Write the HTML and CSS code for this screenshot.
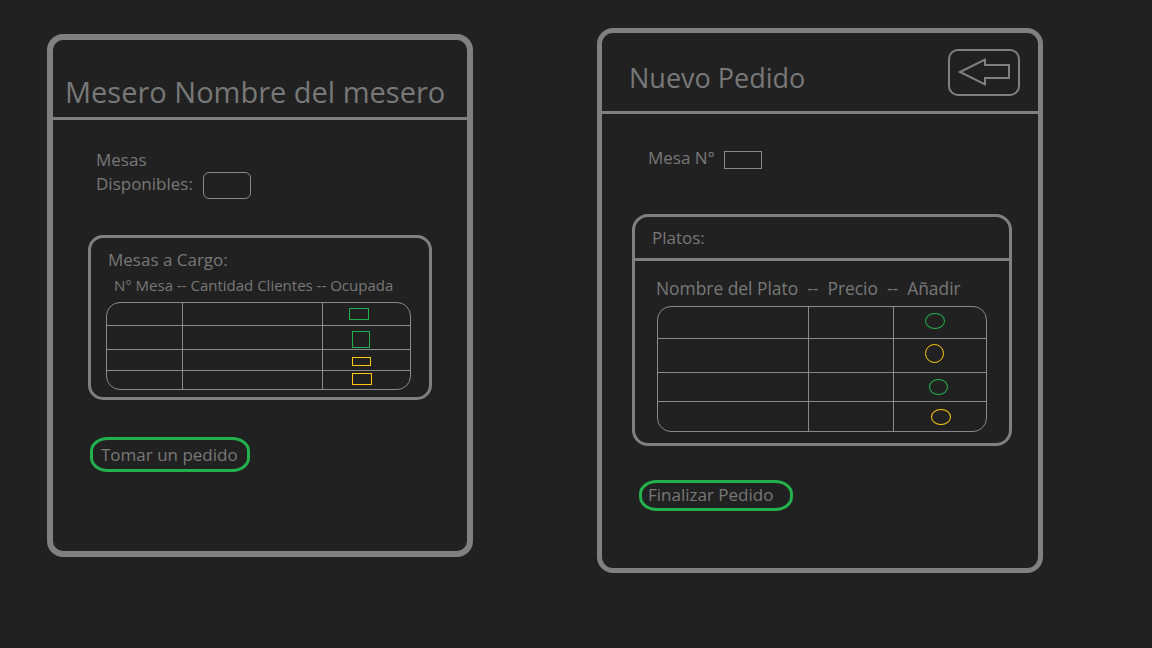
FILE: index.html
```html
<!DOCTYPE html>
<html lang="es">
<head>
    <meta charset="UTF-8">
    <title>Mesero | Pedidos</title>
    <link rel="stylesheet" href="styles.css">
</head>
<body>
    <main class="screens">
        <section class="panel panel-waiter">
            <header class="panel-head">
                <h1 class="panel-title">Mesero Nombre del mesero</h1>
            </header>
            <div class="panel-body">
                <div class="field-row field-tables">
                    <span class="field-label">Mesas<br>Disponibles:</span>
                    <span class="field-box field-box-round"></span>
                </div>

                <div class="card card-tables">
                    <h2 class="card-title">Mesas a Cargo:</h2>
                    <p class="card-cols">N° Mesa -- Cantidad Clientes -- Ocupada</p>
                    <div class="grid grid-tables">
                        <div class="cell"></div><div class="cell"></div><div class="cell cell-mark"><span class="mark rect green r1"></span></div>
                        <div class="cell"></div><div class="cell"></div><div class="cell cell-mark"><span class="mark rect green r2"></span></div>
                        <div class="cell"></div><div class="cell"></div><div class="cell cell-mark"><span class="mark rect yellow r3"></span></div>
                        <div class="cell"></div><div class="cell"></div><div class="cell cell-mark"><span class="mark rect yellow r4"></span></div>
                    </div>
                </div>

                <button class="pill-btn btn-take">Tomar un pedido</button>
            </div>
        </section>

        <section class="panel panel-order">
            <header class="panel-head">
                <h1 class="panel-title">Nuevo Pedido</h1>
                <button class="back-btn" aria-label="Volver">
                    <svg width="68" height="43" viewBox="0 0 68 43">
                        <polygon points="10,21 35,8.5 35,14 59,14 59,27 35,27 35,33.5" fill="none" stroke="#808080" stroke-width="2" stroke-linejoin="miter"/>
                    </svg>
                </button>
            </header>
            <div class="panel-body">
                <div class="field-row field-table-no">
                    <span class="field-label">Mesa N°</span>
                    <span class="field-box field-box-square"></span>
                </div>

                <div class="card card-dishes">
                    <div class="card-head">
                        <h2 class="card-title">Platos:</h2>
                    </div>
                    <p class="card-cols">Nombre del Plato  --  Precio  --  Añadir</p>
                    <div class="grid grid-dishes">
                        <div class="cell"></div><div class="cell"></div><div class="cell cell-mark"><span class="mark dot green d1"></span></div>
                        <div class="cell"></div><div class="cell"></div><div class="cell cell-mark"><span class="mark dot yellow d2"></span></div>
                        <div class="cell"></div><div class="cell"></div><div class="cell cell-mark"><span class="mark dot green d3"></span></div>
                        <div class="cell"></div><div class="cell"></div><div class="cell cell-mark"><span class="mark dot yellow d4"></span></div>
                    </div>
                </div>

                <button class="pill-btn btn-finish">Finalizar Pedido</button>
            </div>
        </section>
    </main>
</body>
</html>
```

FILE: styles.css
```css
* {
    box-sizing: border-box;
}

body {
    margin: 0;
    background-color: #212121;
    color: #787878;
    font-family: 'Open Sans', sans-serif;
    height: 648px;
    overflow: hidden;
}

.screens {
    display: flex;
    align-items: flex-start;
    gap: 124px;
    padding-left: 47px;
}

/* Panels */
.panel {
    border: 6px solid #808080;
    border-radius: 16px;
}

.panel-waiter {
    margin-top: 34px;
    width: 426px;
    height: 523px;
}

.panel-order {
    margin-top: 28px;
    width: 446px;
    height: 545px;
    border-width: 5px;
}

.panel-head {
    border-bottom: 3px solid #808080;
}

.panel-title {
    margin: 0;
    font-weight: 400;
    white-space: nowrap;
}

.panel-waiter .panel-head {
    height: 80px;
    padding: 32px 0 0 12px;
}

.panel-waiter .panel-title {
    font-size: 29px;
    line-height: 40px;
}

.panel-order .panel-head {
    height: 81px;
    display: flex;
    align-items: center;
    justify-content: space-between;
    padding: 0 18px 0 27px;
}

.panel-order .panel-title {
    font-size: 27px;
    line-height: 37px;
    margin-top: 10px;
}

.back-btn {
    width: 72px;
    height: 47px;
    padding: 0;
    border: 2px solid #808080;
    border-radius: 10px;
    background: none;
    display: flex;
}

/* Fields */
.field-row {
    display: flex;
    font-size: 17px;
    line-height: 24px;
}

.field-tables {
    margin: 28px 0 0 43px;
    align-items: flex-end;
    gap: 10px;
}

.field-box {
    display: inline-block;
    border: 1px solid #8a8a8a;
}

.field-box-round {
    width: 48px;
    height: 27px;
    border-radius: 6px;
    margin-bottom: -3px;
}

.field-table-no {
    margin: 32px 0 0 46px;
    align-items: center;
    gap: 9px;
}

.field-box-square {
    width: 38px;
    height: 18px;
    margin-top: 3px;
}

/* Cards */
.card {
    border: 3px solid #808080;
    border-radius: 15px;
}

.card-title {
    margin: 0;
    font-size: 17px;
    font-weight: 400;
    line-height: 23px;
}

.card-cols {
    margin: 0;
    white-space: pre;
}

.card-tables {
    margin: 39px 0 0 35px;
    width: 344px;
    height: 165px;
    padding: 10px 0 0 17px;
}

.card-tables .card-cols {
    font-size: 15px;
    line-height: 20px;
    margin: 4px 0 0 6px;
}

.card-dishes {
    margin: 44px 0 0 30px;
    width: 380px;
    height: 232px;
    border-radius: 16px;
}

.card-head {
    height: 44px;
    border-bottom: 3px solid #808080;
    display: flex;
    align-items: center;
    padding-left: 17px;
}

.card-dishes .card-cols {
    font-size: 17.4px;
    line-height: 23px;
    margin: 16px 0 0 21px;
}

/* Wireframe grids */
.grid {
    display: grid;
    border: 1px solid #8a8a8a;
    border-radius: 14px;
    overflow: hidden;
}

.cell {
    border-right: 1px solid #8a8a8a;
    border-bottom: 1px solid #8a8a8a;
}

.cell:nth-child(3n) {
    border-right: none;
}

.cell:nth-last-child(-n+3) {
    border-bottom: none;
}

.grid-tables {
    margin: 7px 0 0 -2px;
    width: 305px;
    height: 88px;
    grid-template-columns: 76px 140px 1fr;
    grid-template-rows: 23px 24px 21px 1fr;
}

.grid-dishes {
    margin: 6px 0 0 22px;
    width: 330px;
    height: 126px;
    grid-template-columns: 151px 85px 1fr;
    grid-template-rows: 32px 34px 29px 1fr;
}

.mark {
    display: block;
    border: 1px solid;
}

.green { border-color: #22b14c; }
.yellow { border-color: #ffc90e; }

/* Ocupada marks, offsets from the cell corner */
.rect.r1 { width: 20px; height: 12px; margin: 5px 0 0 26px; }
.rect.r2 { width: 18px; height: 17px; margin: 5px 0 0 29px; }
.rect.r3 { width: 19px; height: 9px; margin: 7px 0 0 29px; }
.rect.r4 { width: 20px; height: 12px; margin: 2px 0 0 29px; }

/* Añadir marks */
.dot { border-radius: 50%; }
.dot.d1 { width: 20px; height: 16px; margin: 6px 0 0 31px; }
.dot.d2 { width: 19px; height: 19px; margin: 5px 0 0 31px; }
.dot.d3 { width: 19px; height: 16px; margin: 6px 0 0 35px; }
.dot.d4 { width: 20px; height: 16px; margin: 7px 0 0 37px; }

/* Green outlined buttons */
.pill-btn {
    display: block;
    background: none;
    border: 3px solid #22b14c;
    border-radius: 18px / 14px;
    color: #787878;
    font-family: 'Open Sans', sans-serif;
    font-size: 17px;
    text-align: left;
    padding: 0 0 0 8px;
}

.btn-take {
    margin: 37px 0 0 37px;
    width: 160px;
    height: 35px;
}

.btn-finish {
    margin: 34px 0 0 37px;
    width: 154px;
    height: 31px;
    padding-left: 6px;
    padding-bottom: 3px;
}
```
